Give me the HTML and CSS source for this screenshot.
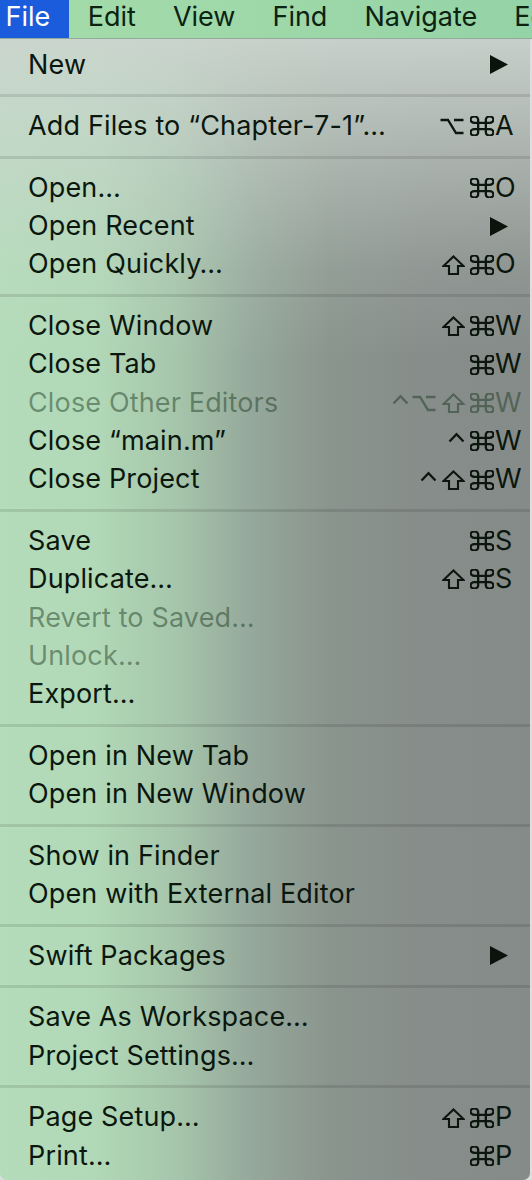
FILE: index.html
```html
<!DOCTYPE html>
<html lang="en">
<head>
<meta charset="utf-8">
<title>File menu</title>
<link rel="stylesheet" href="styles.css">
</head>
<body>
<svg width="0" height="0" class="defs" aria-hidden="true">
  <defs>
    <symbol id="cmd" viewBox="2.6 2.6 18.8 18.8" preserveAspectRatio="none">
      <path d="M15 6v12a3 3 0 1 0 3-3H6a3 3 0 1 0 3 3V6a3 3 0 1 0-3 3h12a3 3 0 1 0-3-3" fill="none" stroke="currentColor" stroke-width="2.3" vector-effect="non-scaling-stroke"/>
    </symbol>
    <symbol id="shift" viewBox="0 0 23 20">
      <path d="M11.5 1.4 L21.6 11 H16 V19 H7 V11 H1.4 Z" fill="none" stroke="currentColor" stroke-width="2.1" stroke-linejoin="miter"/>
    </symbol>
    <symbol id="opt" viewBox="0 0 24 19">
      <path d="M0.5 3.5 H8 L16 16.5 H23.5 M14 3.5 H23.5" fill="none" stroke="currentColor" stroke-width="2.3"/>
    </symbol>
    <symbol id="ctrl" viewBox="0 0 17 19">
      <path d="M1.5 10 L8.5 2.6 L15.5 10" fill="none" stroke="currentColor" stroke-width="2.3"/>
    </symbol>
    <symbol id="tri" viewBox="0 0 18 19">
      <path d="M0 0 L18 9.5 L0 19 Z" fill="currentColor"/>
    </symbol>
  </defs>
</svg>

<nav class="menubar">
  <span class="mb-item mb-active">File</span>
  <span class="mb-item">Edit</span>
  <span class="mb-item">View</span>
  <span class="mb-item">Find</span>
  <span class="mb-item">Navigate</span>
  <span class="mb-item">Editor</span>
</nav>

<div class="menu">
  <div class="item"><span class="label">New</span><svg class="tri"><use href="#tri"/></svg></div>
  <div class="sep"></div>
  <div class="item"><span class="label">Add Files to “Chapter-7-1”…</span><span class="sc"><span class="mods"><svg class="g-opt"><use href="#opt"/></svg><svg class="g-cmd"><use href="#cmd"/></svg></span><span class="key">A</span></span></div>
  <div class="sep"></div>
  <div class="item"><span class="label">Open…</span><span class="sc"><span class="mods"><svg class="g-cmd"><use href="#cmd"/></svg></span><span class="key">O</span></span></div>
  <div class="item"><span class="label">Open Recent</span><svg class="tri"><use href="#tri"/></svg></div>
  <div class="item"><span class="label">Open Quickly…</span><span class="sc"><span class="mods"><svg class="g-shift"><use href="#shift"/></svg><svg class="g-cmd"><use href="#cmd"/></svg></span><span class="key">O</span></span></div>
  <div class="sep"></div>
  <div class="item"><span class="label">Close Window</span><span class="sc"><span class="mods"><svg class="g-shift"><use href="#shift"/></svg><svg class="g-cmd"><use href="#cmd"/></svg></span><span class="key">W</span></span></div>
  <div class="item"><span class="label">Close Tab</span><span class="sc"><span class="mods"><svg class="g-cmd"><use href="#cmd"/></svg></span><span class="key">W</span></span></div>
  <div class="item disabled"><span class="label">Close Other Editors</span><span class="sc"><span class="mods mods-tight"><svg class="g-ctrl"><use href="#ctrl"/></svg><svg class="g-opt"><use href="#opt"/></svg><svg class="g-shift"><use href="#shift"/></svg><svg class="g-cmd"><use href="#cmd"/></svg></span><span class="key">W</span></span></div>
  <div class="item"><span class="label">Close “main.m”</span><span class="sc"><span class="mods"><svg class="g-ctrl"><use href="#ctrl"/></svg><svg class="g-cmd"><use href="#cmd"/></svg></span><span class="key">W</span></span></div>
  <div class="item"><span class="label">Close Project</span><span class="sc"><span class="mods"><svg class="g-ctrl"><use href="#ctrl"/></svg><svg class="g-shift"><use href="#shift"/></svg><svg class="g-cmd"><use href="#cmd"/></svg></span><span class="key">W</span></span></div>
  <div class="sep"></div>
  <div class="item"><span class="label">Save</span><span class="sc"><span class="mods"><svg class="g-cmd"><use href="#cmd"/></svg></span><span class="key">S</span></span></div>
  <div class="item"><span class="label">Duplicate…</span><span class="sc"><span class="mods"><svg class="g-shift"><use href="#shift"/></svg><svg class="g-cmd"><use href="#cmd"/></svg></span><span class="key">S</span></span></div>
  <div class="item disabled"><span class="label">Revert to Saved…</span></div>
  <div class="item disabled"><span class="label">Unlock…</span></div>
  <div class="item"><span class="label">Export…</span></div>
  <div class="sep"></div>
  <div class="item"><span class="label">Open in New Tab</span></div>
  <div class="item"><span class="label">Open in New Window</span></div>
  <div class="sep"></div>
  <div class="item"><span class="label">Show in Finder</span></div>
  <div class="item"><span class="label">Open with External Editor</span></div>
  <div class="sep"></div>
  <div class="item"><span class="label">Swift Packages</span><svg class="tri"><use href="#tri"/></svg></div>
  <div class="sep"></div>
  <div class="item"><span class="label">Save As Workspace…</span></div>
  <div class="item"><span class="label">Project Settings…</span></div>
  <div class="sep"></div>
  <div class="item"><span class="label">Page Setup…</span><span class="sc"><span class="mods"><svg class="g-shift"><use href="#shift"/></svg><svg class="g-cmd"><use href="#cmd"/></svg></span><span class="key">P</span></span></div>
  <div class="item"><span class="label">Print…</span><span class="sc"><span class="mods"><svg class="g-cmd"><use href="#cmd"/></svg></span><span class="key">P</span></span></div>
</div>
</body>
</html>
```
FILE: styles.css
```css
html, body {
  margin: 0;
  padding: 0;
}

body {
  width: 532px;
  height: 1180px;
  overflow: hidden;
  background: #dcdfdd;
  font-family: "Inter", "Noto Sans", "Liberation Sans", sans-serif;
  font-size: 27px;
  letter-spacing: 0.15px;
  color: #0b170e;
}

.defs {
  position: absolute;
  width: 0;
  height: 0;
}

/* ---------- menu bar ---------- */
.menubar {
  display: flex;
  height: 38px;
  border-bottom: 1px solid #93a99b;
  background: linear-gradient(to right, #a5dbaa 0%, #9ed8a9 50%, #94d3a6 100%);
  white-space: nowrap;
  overflow: hidden;
  letter-spacing: 0;
}

.mb-item {
  flex: none;
  height: 38px;
  line-height: 33px;
  padding: 0 18.5px;
  color: #0c2311;
}

.mb-active {
  padding: 0 19px 0 5.5px;
  background: #1b5cdc;
  color: #ffffff;
}

/* ---------- menu ---------- */
.menu {
  width: 530px;
  height: 1141px;
  box-sizing: border-box;
  padding: 6.5px 0 5px;
  border-radius: 0 0 7px 7px;
  overflow: hidden;
  background:
    linear-gradient(to bottom,
      rgba(204, 213, 207, 0.92) 0px,
      rgba(204, 213, 207, 0.55) 110px,
      rgba(204, 213, 207, 0.15) 230px,
      rgba(204, 213, 207, 0) 320px),
    linear-gradient(to right,
      #b4dcba 0%,
      #b1d8b7 18%,
      #a6c6ab 33%,
      #95a79a 48%,
      #8a958e 62%,
      #868d8a 80%,
      #858b88 100%);
}

.item {
  display: flex;
  align-items: center;
  height: 38.33px;
  padding: 0 4px 0 28px;
  white-space: nowrap;
}

.label {
  flex: 1;
  line-height: 38.33px;
}

.disabled {
  color: rgba(25, 55, 32, 0.48);
}

.sep {
  height: 23.3px;
  display: flex;
  align-items: center;
}

.sep::before {
  content: "";
  display: block;
  width: 100%;
  height: 3px;
  background: rgba(0, 0, 0, 0.1);
}

/* shortcuts */
.sc {
  display: flex;
  align-items: center;
}

.mods {
  display: flex;
  align-items: center;
  gap: 5px;
}

.key {
  width: 32px;
  line-height: 38.33px;
  padding-left: 1px;
  box-sizing: border-box;
  letter-spacing: 0;
}

.mods svg {
  display: block;
  height: 20px;
  color: currentColor;
}

.g-cmd { width: 24px; }
.g-shift { width: 23px; }
.g-opt { width: 24px; margin-right: 1px; }
.g-ctrl { width: 17px; }

.mods-tight .g-ctrl { margin-right: -2px; }

.tri {
  display: block;
  width: 18px;
  height: 19px;
  margin-right: 18px;
  color: #0b130d;
}
```
